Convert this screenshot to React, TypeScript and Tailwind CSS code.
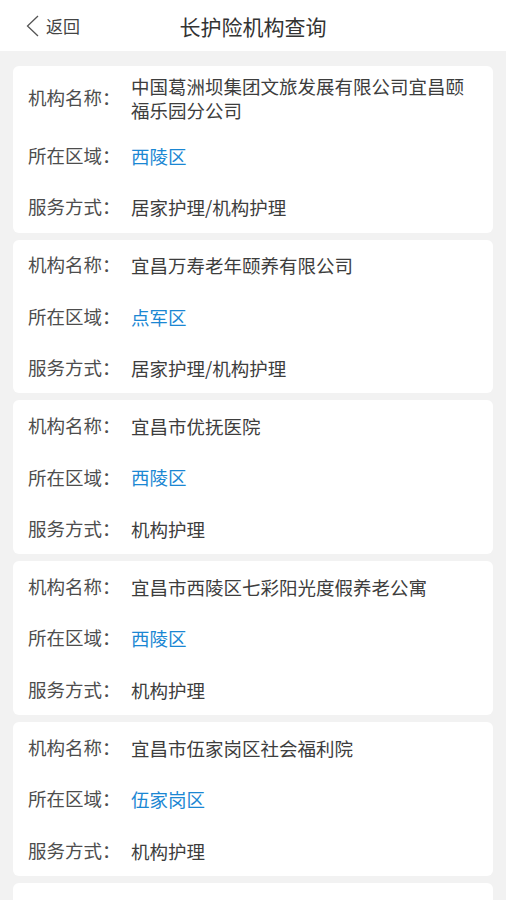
interface Org {
  name: string;
  area: string;
  service: string;
}

const orgs: Org[] = [
  { name: '中国葛洲坝集团文旅发展有限公司宜昌颐福乐园分公司', area: '西陵区', service: '居家护理/机构护理' },
  { name: '宜昌万寿老年颐养有限公司', area: '点军区', service: '居家护理/机构护理' },
  { name: '宜昌市优抚医院', area: '西陵区', service: '机构护理' },
  { name: '宜昌市西陵区七彩阳光度假养老公寓', area: '西陵区', service: '机构护理' },
  { name: '宜昌市伍家岗区社会福利院', area: '伍家岗区', service: '机构护理' },
  { name: '宜昌市夷陵区福利院', area: '夷陵区', service: '机构护理' },
];

function Row({ label, value, blue }: { label: string; value: string; blue?: boolean }) {
  return (
    <div className="flex items-center min-h-[51.3px] py-2">
      <span className="w-[103px] shrink-0 text-[#4d4d4d]">{label}：</span>
      <span className={`flex-1 leading-6 ${blue ? 'text-[#1b87d3]' : 'text-[#3d3d3d]'}`}>{value}</span>
    </div>
  );
}

export default function App() {
  return (
    <div
      className="min-h-screen bg-[#f2f2f2] text-[18.5px]"
      style={{ fontFamily: '"Noto Sans CJK SC", "Noto Sans", sans-serif' }}
    >
      <div className="relative h-[51px] bg-white flex items-center justify-center">
        <div className="absolute left-[26px] top-0 h-full flex items-center text-[#444]">
          <svg width="13" height="22" viewBox="0 0 13 22" fill="none" className="mt-[1px]">
            <polyline points="12,1 1.5,11 12,21" stroke="#555" strokeWidth="1.3" />
          </svg>
          <span className="text-[17px] ml-[7px]">返回</span>
        </div>
        <h1 className="text-[21px] text-[#333] mt-[2px]">长护险机构查询</h1>
      </div>

      <div className="px-[13px] pt-[15px] flex flex-col gap-[7px]">
        {orgs.map((o, i) => (
          <div key={i} className="bg-white rounded-md pl-[15px] pr-[16px]">
            <Row label="机构名称" value={o.name} />
            <Row label="所在区域" value={o.area} blue />
            <Row label="服务方式" value={o.service} />
          </div>
        ))}
      </div>
    </div>
  );
}
